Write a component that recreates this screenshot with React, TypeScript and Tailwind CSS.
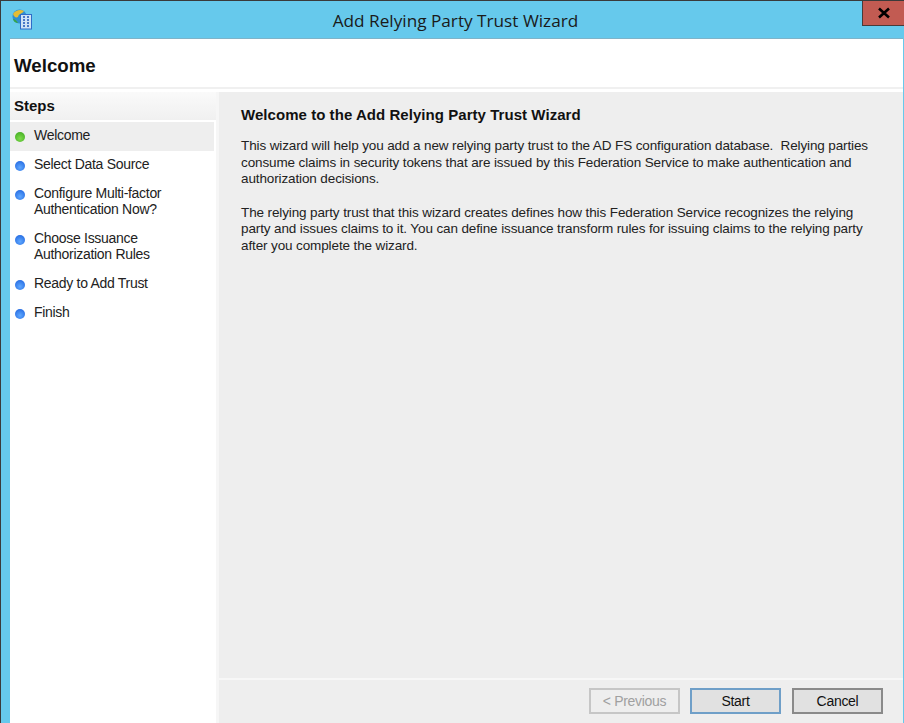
const sans = "font-['Liberation_Sans',sans-serif]";

function Dot({ green }: { green?: boolean }) {
  return (
    <span
      className={
        green
          ? "mt-[5px] h-[10px] w-[10px] shrink-0 rounded-full bg-[radial-gradient(circle_at_50%_65%,#7fdc4c,#39a51c)]"
          : "mt-[5px] h-[10px] w-[10px] shrink-0 rounded-full bg-[radial-gradient(circle_at_50%_65%,#5fa8ff,#1a5fdc)]"
      }
    />
  );
}

function Step({ label, green, active }: { label: string[]; green?: boolean; active?: boolean }) {
  return (
    <div
      className={`mr-[2px] flex gap-[9px] pb-[8px] pl-[5px] pr-[2px] pt-[5px] text-[14px] leading-[16px] tracking-[-0.3px] text-[#222] ${
        active ? "bg-[#eeeeee]" : ""
      }`}
    >
      <Dot green={green} />
      <div>
        {label.map((l) => (
          <div key={l}>{l}</div>
        ))}
      </div>
    </div>
  );
}

function Btn({ label, kind }: { label: string; kind: "off" | "focus" | "on" }) {
  const cls =
    kind === "off"
      ? "border-[#c6c6c6] bg-[#eeeeee] text-[#a0a0a0]"
      : kind === "focus"
        ? "border-[#6f9fc8] bg-[#e1e1e1] text-[#111]"
        : "ml-px border-[#8a8a8a] bg-[#e1e1e1] text-[#111]";
  return (
    <div className={`flex h-[26px] w-[91px] items-center justify-center border-2 text-[14px] tracking-[-0.3px] ${cls}`}>
      {label}
    </div>
  );
}

export default function App() {
  return (
    <div className={`flex h-[723px] w-[904px] flex-col overflow-hidden border-l border-t border-[#3a3a3a] bg-[#66c9ec] ${sans}`}>
      <div className="relative flex h-[37px] shrink-0 items-center justify-center">
        <svg className="absolute left-[11px] top-[8px]" width="21" height="21" viewBox="0 0 21 21">
          <circle cx="7.5" cy="7.5" r="7" fill="#2f8fd0" />
          <path d="M1 5 C3 1 9 0 12 2 C10 5 7 4 6 8 C4 9 2 8 1 5Z" fill="#e5bd35" />
          <path d="M1 10 C3 10 5 12 6 14 C3.500 14 1.500 12.500 1 10Z" fill="#36a548" />
          <rect x="8.500" y="5.500" width="11" height="14.500" fill="#cfe3f5" stroke="#2f6cc8" />
          <path d="M11 8h2M15 8h2M11 11h2M15 11h2M11 14h2M15 14h2M11 17h2M15 17h2" stroke="#1f55b8" strokeWidth="1.6" />
        </svg>
        <span className="ml-[6px] mt-[2px] font-['Open_Sans',sans-serif] text-[17.2px] text-[#1a1a1a]">Add Relying Party Trust Wizard</span>
        <div className="absolute right-0 top-0 flex h-[25px] w-[42px] items-center justify-center border-b border-l border-[#4a3a38] bg-[#c25b52]">
          <svg width="14" height="12" viewBox="0 0 14 12">
            <path d="M2 1.500 L12 10.500 M12 1.500 L2 10.500" stroke="#000" strokeWidth="2.600" />
          </svg>
        </div>
      </div>

      <div className="ml-[9px] mr-px flex min-h-0 flex-1 flex-col border-t border-[#7fb3c8] bg-white">
        <div className="flex h-[50px] shrink-0 items-center border-b-2 border-[#f0f0f0] pl-[4px] pt-[6px] text-[18.700px] font-bold text-[#111]">
          Welcome
        </div>
        <div className="flex min-h-0 flex-1 pt-[3px]">
          <div className="w-[206px] shrink-0">
            <div className="flex h-[28px] items-center bg-gradient-to-b from-[#fafafa] to-[#f0f0f0] pl-[4px] pt-[1px] text-[15px] font-bold text-[#111]">
              Steps
            </div>
            <div className="pt-[2px]">
              <Step label={["Welcome"]} green active />
              <Step label={["Select Data Source"]} />
              <Step label={["Configure Multi-factor", "Authentication Now?"]} />
              <Step label={["Choose Issuance", "Authorization Rules"]} />
              <Step label={["Ready to Add Trust"]} />
              <Step label={["Finish"]} />
            </div>
          </div>
          <div className="w-[3px] shrink-0 bg-[#f6f6f6]" />
          <div className="flex min-w-0 flex-1 flex-col bg-[#eeeeee]">
            <div className="min-h-0 flex-1 pl-[22px] pt-[14px] text-[13.500px] leading-[16.600px] tracking-[-0.12px] text-[#222]">
              <div className="text-[15px] font-bold leading-[18px] tracking-[0.05px] text-[#111]">Welcome to the Add Relying Party Trust Wizard</div>
              <p className="mt-[14px] whitespace-pre">
                {"This wizard will help you add a new relying party trust to the AD FS configuration database.  Relying parties\nconsume claims in security tokens that are issued by this Federation Service to make authentication and\nauthorization decisions."}
              </p>
              <p className="mt-[17px] whitespace-pre">
                {"The relying party trust that this wizard creates defines how this Federation Service recognizes the relying\nparty and issues claims to it. You can define issuance transform rules for issuing claims to the relying party\nafter you complete the wizard."}
              </p>
            </div>
            <div className="flex h-[45px] shrink-0 items-start justify-end gap-[10px] border-t-2 border-[#f7f7f7] pr-[20px] pt-[8px]">
              <Btn label="< Previous" kind="off" />
              <Btn label="Start" kind="focus" />
              <Btn label="Cancel" kind="on" />
            </div>
          </div>
        </div>
      </div>
    </div>
  );
}
